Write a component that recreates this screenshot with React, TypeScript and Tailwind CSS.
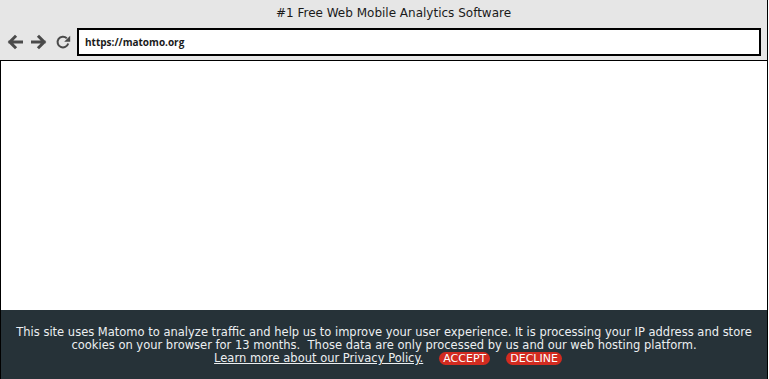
import * as React from 'react'

// ---------------------------------------------------------------------------
// Icons
// ---------------------------------------------------------------------------

function ArrowLeft() {
  return (
    <svg width="16" height="16" viewBox="0 0 16 16" fill="none" stroke="#4a4a4a" strokeWidth="3" strokeLinecap="square">
      <path d="M14.5 8H3M8 2.8L2.8 8l5.2 5.2" />
    </svg>
  )
}

function ArrowRight() {
  return (
    <svg width="16" height="16" viewBox="0 0 16 16" fill="none" stroke="#4a4a4a" strokeWidth="3" strokeLinecap="square">
      <path d="M1.5 8H13M8 2.8L13.2 8 8 13.2" />
    </svg>
  )
}

function Reload() {
  return (
    <svg width="16" height="16" viewBox="0 0 16 16" fill="none">
      <path d="M13.2 9.5A5.4 5.4 0 1 1 11.8 4.2" stroke="#4a4a4a" strokeWidth="2" />
      <path d="M9.2 7.8h6V1.8z" fill="#4a4a4a" />
    </svg>
  )
}

// ---------------------------------------------------------------------------
// App
// ---------------------------------------------------------------------------

export default function App() {
  return (
    <div className="w-[769px] h-[379px] bg-white overflow-hidden">
      <div className="w-[768px] h-full flex flex-col border-r border-black">
        {/* Browser chrome */}
        <div className="h-[61px] shrink-0 bg-[#e6e6e6] border-b border-black flex flex-col">
          <div className="h-[28px] pl-[20px] pb-[2px] flex items-center justify-center text-[12px] text-[#1a1a1a] font-['DejaVu_Sans',sans-serif]">
            #1 Free Web Mobile Analytics Software
          </div>
          <div className="flex items-center pl-[7px] pr-[6px]">
            <div className="flex items-center gap-[8px]">
              <ArrowLeft />
              <ArrowRight />
              <Reload />
            </div>
            <div className="ml-[6px] flex-1 h-[28px] bg-white border-2 border-black flex items-center pl-[6px]">
              <span className="text-[10px] font-bold text-[#1a1a1a] font-['Open_Sans',sans-serif]">
                https://matomo.org
              </span>
            </div>
          </div>
        </div>

        {/* Page content */}
        <div className="flex-1 bg-white border-l border-black" />

        {/* Consent banner */}
        <div className="h-[69px] shrink-0 bg-[#263238] border-l border-black pt-[16px] text-center text-[11.5px] leading-[13px] text-[#eceff1] font-['DejaVu_Sans',sans-serif]">
          <p>
            This site uses Matomo to analyze traffic and help us to improve your user experience. It is processing your IP address and store
          </p>
          <p className="whitespace-pre">
            cookies on your browser for 13 months.  Those data are only processed by us and our web hosting platform.
          </p>
          <p className="flex items-center justify-center gap-[16px] pl-[8px]">
            <span className="underline">Learn more about our Privacy Policy.</span>
            <span className="px-[4px] rounded-full bg-[#d22b20] text-white text-[11px]">ACCEPT</span>
            <span className="px-[4px] rounded-full bg-[#d22b20] text-white text-[11px]">DECLINE</span>
          </p>
        </div>
      </div>
    </div>
  )
}
